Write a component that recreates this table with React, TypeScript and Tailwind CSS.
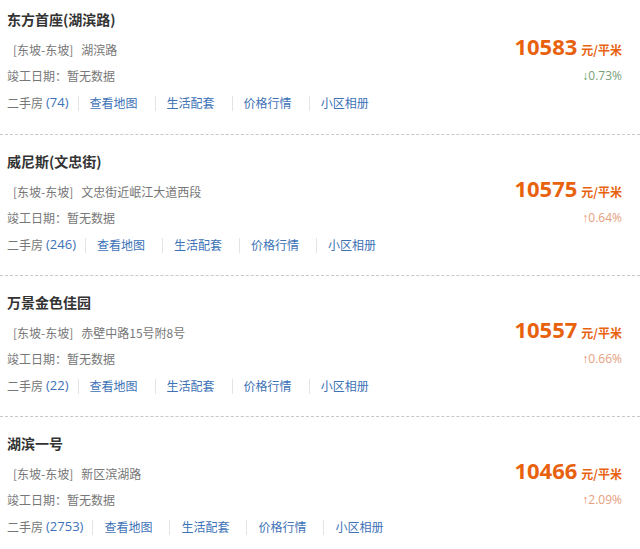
import React from "react";

type Estate = {
  name: string;
  address: string;
  count: number;
  price: number;
  change: string;
  up: boolean;
};

const estates: Estate[] = [
  { name: "东方首座(湖滨路)", address: "湖滨路", count: 74, price: 10583, change: "0.73%", up: false },
  { name: "威尼斯(文忠街)", address: "文忠街近岷江大道西段", count: 246, price: 10575, change: "0.64%", up: true },
  { name: "万景金色佳园", address: "赤壁中路15号附8号", count: 22, price: 10557, change: "0.66%", up: true },
  { name: "湖滨一号", address: "新区滨湖路", count: 2753, price: 10466, change: "2.09%", up: true },
];

const links = ["查看地图", "生活配套", "价格行情", "小区相册"];

function Sep({ first }: { first?: boolean }) {
  return <span className={`${first ? "ml-[9px]" : "ml-[17px]"} mr-[11px] h-[15px] w-px bg-[#e4e4e4]`} />;
}

function EstateCard({ estate, first, last }: { estate: Estate; first: boolean; last: boolean }) {
  return (
    <div
      className={`${first ? "pt-[5px] pb-[17px]" : "pt-[12px] pb-[16px]"} ${last ? "" : "border-b border-dashed border-[#c8c8c8]"} pl-[7px] pr-[18px]`}
    >
      <div className="flex h-[28px] items-center text-[14px] font-bold text-[#333]">{estate.name}</div>

      <div className="mt-[4px] flex h-[26px] items-center justify-between">
        <div className="flex items-center text-[12px] text-[#777]">
          <span className="ml-[6px]">[东坡-东坡]</span>
          <span className="ml-[8px]">{estate.address}</span>
        </div>
        <div className="mb-[6px] flex items-baseline font-bold text-[#e8620e]">
          <span className="font-['Open_Sans',sans-serif] text-[22px] leading-none">{estate.price}</span>
          <span className="ml-[4px] text-[12px]">元/平米</span>
        </div>
      </div>

      <div className="flex h-[26px] items-center justify-between">
        <span className="text-[12px] text-[#777]">竣工日期：暂无数据</span>
        <span className={`font-['Open_Sans',sans-serif] text-[12px] ${estate.up ? "text-[#e6a07e]" : "text-[#7a9e7a]"}`}>
          <span className={estate.up ? "text-[#ea8a5c]" : "text-[#4f9a4f]"}>{estate.up ? "↑" : "↓"}</span>
          {estate.change}
        </span>
      </div>

      <div className="flex h-[28px] items-center text-[12px]">
        <span className="text-[#777]">二手房</span>
        <span className="ml-[3px] font-['Open_Sans',sans-serif] text-[13px] text-[#3d72b6]">({estate.count})</span>
        {links.map((l, i) => (
          <React.Fragment key={l}>
            <Sep first={i === 0} />
            <span className="text-[#3d72b6]">{l}</span>
          </React.Fragment>
        ))}
      </div>
    </div>
  );
}

export default function App() {
  return (
    <div className="h-[549px] w-[640px] overflow-hidden bg-white font-['Noto_Sans_CJK_SC',sans-serif]">
      {estates.map((e, i) => (
        <EstateCard key={e.name} estate={e} first={i === 0} last={i === estates.length - 1} />
      ))}
    </div>
  );
}
